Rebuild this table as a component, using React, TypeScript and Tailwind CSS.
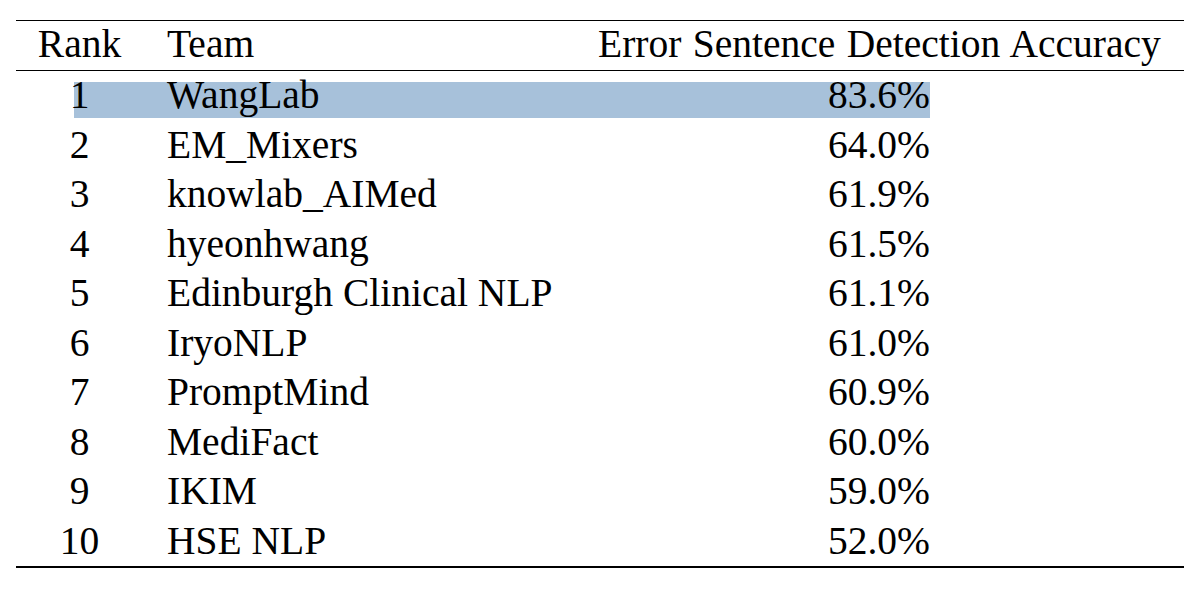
const rows = [
  { rank: "1", team: "WangLab", acc: "83.6%", best: true },
  { rank: "2", team: "EM_Mixers", acc: "64.0%" },
  { rank: "3", team: "knowlab_AIMed", acc: "61.9%" },
  { rank: "4", team: "hyeonhwang", acc: "61.5%" },
  { rank: "5", team: "Edinburgh Clinical NLP", acc: "61.1%" },
  { rank: "6", team: "IryoNLP", acc: "61.0%" },
  { rank: "7", team: "PromptMind", acc: "60.9%" },
  { rank: "8", team: "MediFact", acc: "60.0%" },
  { rank: "9", team: "IKIM", acc: "59.0%" },
  { rank: "10", team: "HSE NLP", acc: "52.0%" },
];

export default function App() {
  return (
    <div className="h-[591px] w-[1200px] bg-white pt-[20px] pl-[16px] text-black font-['Liberation_Serif','Times_New_Roman',serif] text-[39.5px]">
      <div className="w-[1168px] border-t-[1.3px] border-b-2 border-black">
        {/* header */}
        <div className="flex h-[50px] leading-[47.5px] border-b border-black whitespace-nowrap">
          <div className="w-[127px] shrink-0 text-center">Rank</div>
          <div className="w-[455px] shrink-0 pl-[24px]">Team</div>
          <div className="flex-1 [word-spacing:1.5px]">Error Sentence Detection Accuracy</div>
        </div>

        {/* body */}
        {rows.map((r) => (
          <div key={r.rank} className="h-[49.55px] pt-[11px]">
            <div
              className={`ml-[58px] flex h-[36px] w-[856px] leading-[27.5px] whitespace-nowrap ${
                r.best ? "bg-[#a7c1da]" : ""
              }`}
            >
              <div className="-ml-[58px] w-[127px] shrink-0 text-center">{r.rank}</div>
              <div className="w-[455px] shrink-0 pl-[24px]">{r.team}</div>
              <div className="flex-1 text-right">{r.acc}</div>
            </div>
          </div>
        ))}
      </div>
    </div>
  );
}
